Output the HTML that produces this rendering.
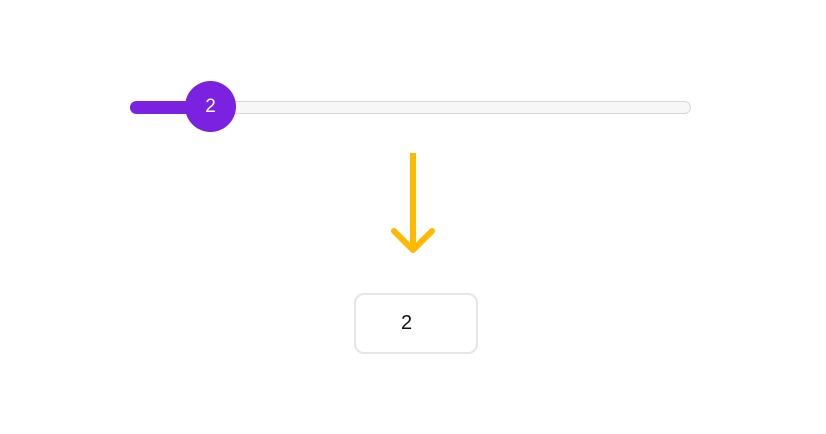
<!DOCTYPE html>
<html><head><meta charset="utf-8"><style>
html,body{margin:0;padding:0;background:#fff;width:826px;height:434px;overflow:hidden;font-family:"Liberation Sans",sans-serif}
.track{position:absolute;left:130px;top:101px;width:559px;height:11px;border:1px solid #d6d6d6;border-radius:7px;background:#f7f7f7}
.fill{position:absolute;left:130px;top:101px;width:85px;height:13px;border-radius:7px;background:#7b22e0}
.knob{position:absolute;left:185px;top:81px;width:51px;height:51px;border-radius:50%;background:#7b22e0;color:#fff;font-size:19px;line-height:51px;text-align:center}
.box{position:absolute;left:354px;top:293px;width:120px;height:57px;border:2px solid #e6e6e6;border-radius:10px;font-size:20px;line-height:57px;color:#111}
.box span{position:absolute;left:45px}
</style></head><body>
<div class="track"></div>
<div class="fill"></div>
<div class="knob">2</div>
<svg style="position:absolute;left:0;top:0" width="826" height="434">
<path d="M413 153 V247" stroke="#ffb900" stroke-width="6" fill="none"/>
<path d="M394 231 L413 250 L432 231" stroke="#ffb900" stroke-width="6" fill="none" stroke-linecap="round" stroke-linejoin="round"/>
</svg>
<div class="box"><span>2</span></div>
</body></html>
